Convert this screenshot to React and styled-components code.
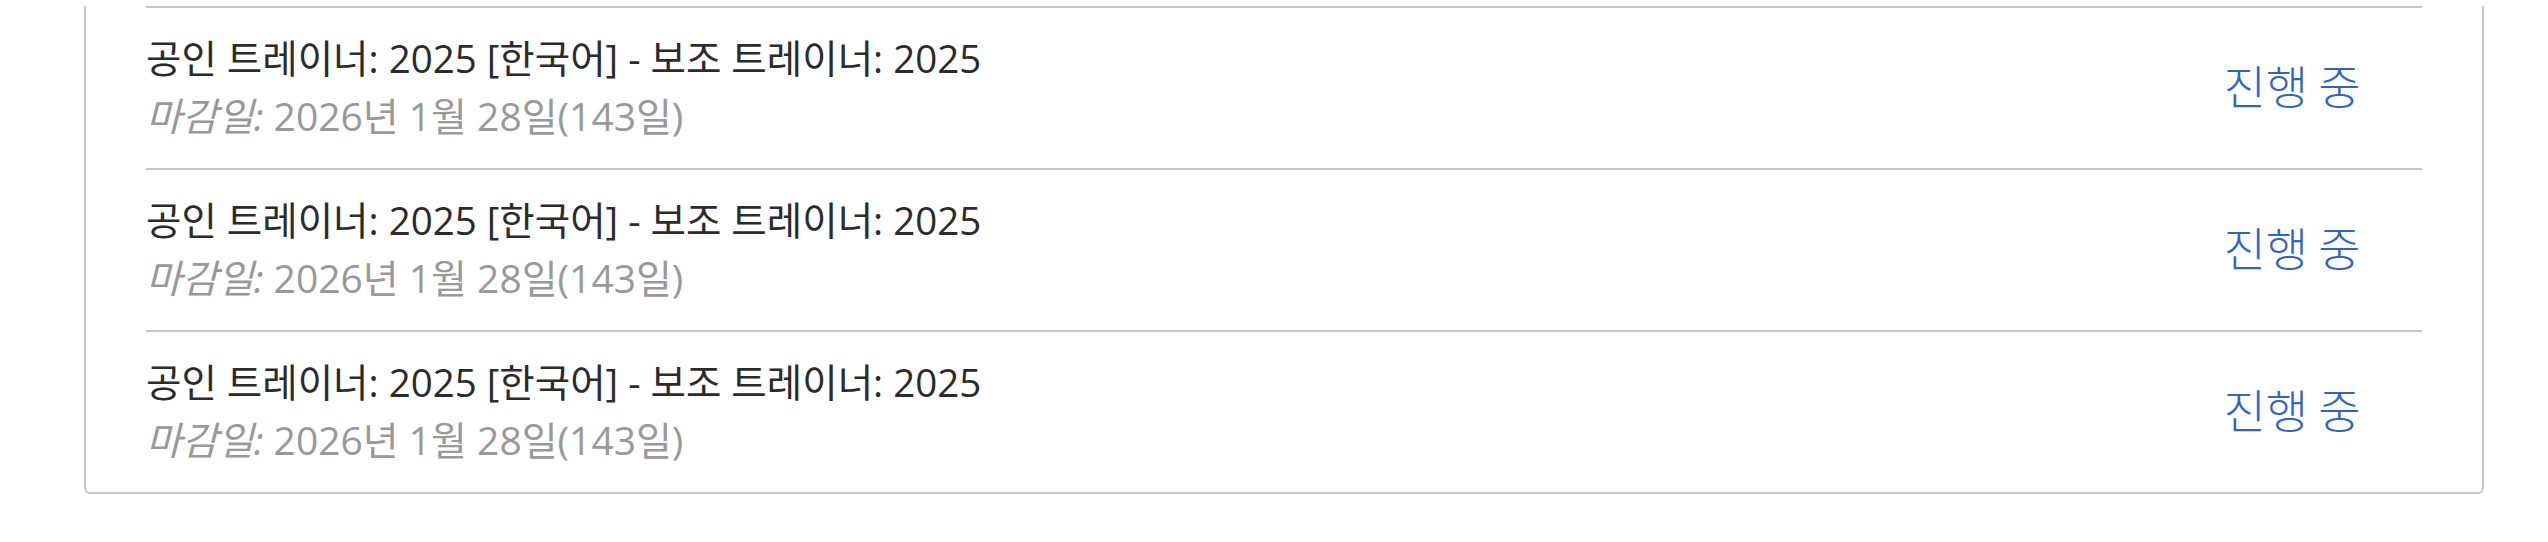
import React from 'react';
import styled, { createGlobalStyle } from 'styled-components';

const GlobalStyle = createGlobalStyle`
    html, body {
        margin: 0;
        padding: 0;
        background: #ffffff;
    }
    body {
        font-family: "Open Sans", "Noto Sans CJK KR", sans-serif;
    }
`

const Page = styled.div`
    padding: 6px 64px 0 84px;
`

const Card = styled.div`
    border: 2px solid #c6c6c6;
    border-top: none;
    border-radius: 0 0 6px 6px;
    padding: 0 60px;
    background: #fff;
`

const Row = styled.div`
    display: flex;
    align-items: center;
    border-top: 2px solid #c6c6c6;
    height: 162px;
    box-sizing: border-box;
`

const Info = styled.div`
    flex: 1;
    align-self: flex-start;
    padding-top: 26px;
`

const Title = styled.div`
    font-size: 38.5px;
    line-height: 48px;
    color: #2b2b2b;
`

const Deadline = styled.div`
    margin-top: 10px;
    font-size: 39px;
    line-height: 48px;
    color: #999999;

    em {
        font-style: italic;
    }
`

const Status = styled.div`
    width: 260px;
    padding-bottom: 9px;
    text-align: center;
    font-family: "Noto Sans CJK KR", sans-serif;
    font-size: 46px;
    font-weight: 300;
    color: #2e63c9;
`

const courses = [
    { title: '공인 트레이너: 2025 [한국어] - 보조 트레이너: 2025', due: '2026년 1월 28일(143일)', status: '진행 중' },
    { title: '공인 트레이너: 2025 [한국어] - 보조 트레이너: 2025', due: '2026년 1월 28일(143일)', status: '진행 중' },
    { title: '공인 트레이너: 2025 [한국어] - 보조 트레이너: 2025', due: '2026년 1월 28일(143일)', status: '진행 중' },
]

function App() {
    return (
        <>
            <GlobalStyle />
            <Page>
                <Card>
                    {courses.map((c, i) => (
                        <Row key={i}>
                            <Info>
                                <Title>{c.title}</Title>
                                <Deadline><em>마감일:</em> {c.due}</Deadline>
                            </Info>
                            <Status>{c.status}</Status>
                        </Row>
                    ))}
                </Card>
            </Page>
        </>
    )
}

export default App
